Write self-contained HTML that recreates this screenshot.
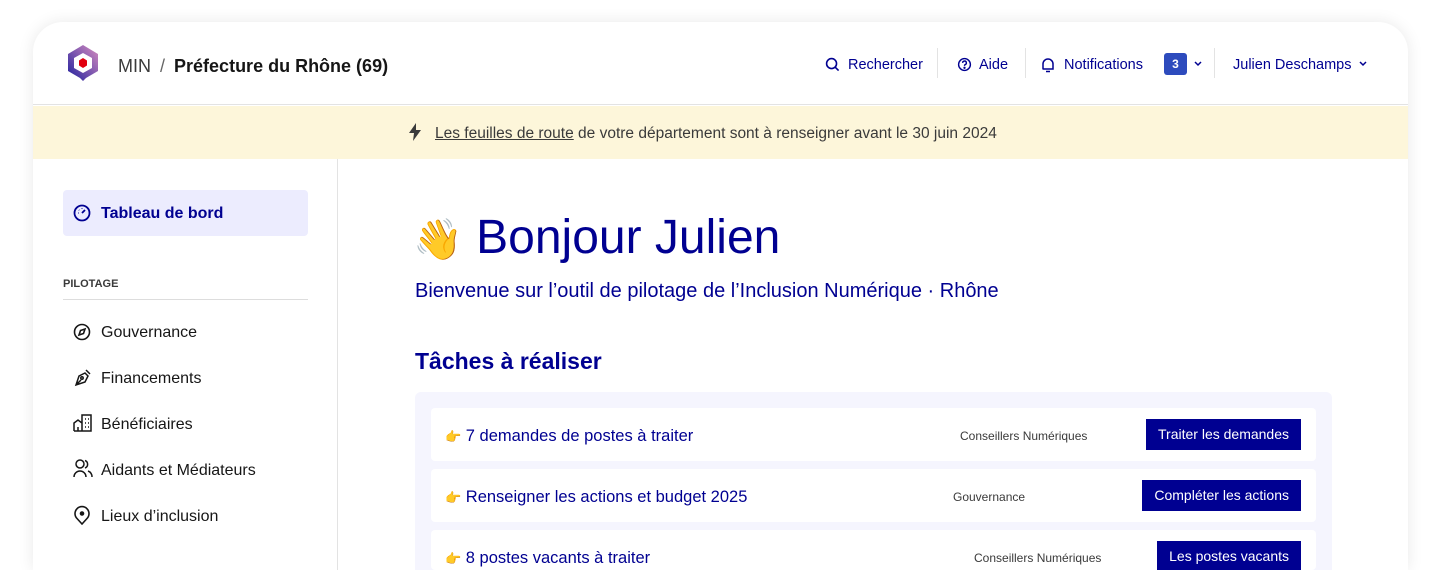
<!DOCTYPE html>
<html><head><meta charset="utf-8"><style>
*{box-sizing:border-box;margin:0;padding:0}
html,body{width:1442px;height:570px;overflow:hidden}
body{background:#fff;font-family:"Liberation Sans",sans-serif;position:relative}
.card{position:absolute;left:33px;top:22px;width:1375px;height:548px;border-radius:30px 30px 0 0;background:#fff;box-shadow:0 0 16px rgba(0,0,0,.09);overflow:hidden}
.hdr{height:83px;border-bottom:1px solid #e3e3e3;position:relative}
.abs{position:absolute;white-space:nowrap}
.nav{color:#000091;font-size:14.5px}
.sep{position:absolute;top:26px;width:1px;height:30px;background:#e3e3e3}
.banner{position:absolute;top:84px;left:0;right:0;height:53px;background:#fdf6da;font-size:15.5px;color:#3a3a3a}
.side{position:absolute;top:137px;left:0;width:305px;bottom:0;border-right:1px solid #e3e3e3}
.item{position:absolute;left:68px;font-size:16px;color:#161616}
.task{position:absolute;left:398px;width:885px;height:53px;background:#fff;border-radius:4px}
.task .t{position:absolute;left:14px;top:19px;font-size:16.5px;color:#000091}
.task .c{position:absolute;font-size:12px;color:#3a3a3a;top:21px}
.task .b{position:absolute;right:15px;top:11px;height:31px;background:#000091;color:#fff;font-size:14px;line-height:31px;padding:0 12px}
</style></head><body>
<div class="card">
 <div class="hdr">
  <svg class="abs" style="left:32px;top:22px" width="36" height="38" viewBox="0 0 36 38"><defs><linearGradient id="g" x1="0" y1="1" x2="1" y2="0"><stop offset="0" stop-color="#1f1f9e"/><stop offset="1" stop-color="#d98ec0"/></linearGradient></defs><path d="M18 1L33 10V27L21 34L18 37L15 34L3 27V10Z" fill="url(#g)"/><path d="M18 9L27 14V24L18 29L9 24V14Z" fill="#fff"/><path d="M18 14L22 16.5V21.5L18 24L14 21.5V16.5Z" fill="#e1000f"/></svg>
  <div class="abs" style="left:85px;top:34px;font-size:18px;color:#3a3a3a">MIN <span style="color:#666;margin:0 4px">/</span> <b style="color:#161616">Préfecture du Rhône (69)</b></div>
  <svg class="abs" style="left:792px;top:35px" width="15" height="15" viewBox="0 0 16 16" fill="none" stroke="#000091" stroke-width="1.7"><circle cx="7" cy="7" r="5.3"/><path d="M11 11l3.5 3.5"/></svg>
  <div class="abs nav" style="left:815px;top:35px">Rechercher</div>
  <div class="sep" style="left:904px"></div>
  <svg class="abs" style="left:924px;top:35px" width="15" height="15" viewBox="0 0 16 16" fill="none" stroke="#000091" stroke-width="1.5"><circle cx="8" cy="8" r="6.3"/><path d="M6 6.3a2 2 0 1 1 2.6 1.9c-.5.2-.6.6-.6 1.3"/><circle cx="8" cy="11.5" r=".5" fill="#000091"/></svg>
  <div class="abs nav" style="left:946px;top:35px">Aide</div>
  <div class="sep" style="left:992px"></div>
  <svg class="abs" style="left:1008px;top:35px" width="14" height="16" viewBox="0 0 14 16" fill="none" stroke="#000091" stroke-width="1.5"><path d="M2 12V7a5 5 0 0 1 10 0v5H1.5h11M5 14.5h4"/></svg>
  <div class="abs nav" style="left:1031px;top:35px">Notifications</div>
  <div class="abs" style="left:1131px;top:31px;width:23px;height:22px;background:#2d4bbd;border-radius:3px;color:#fff;font-size:12px;font-weight:bold;text-align:center;line-height:22px">3</div>
  <svg class="abs" style="left:1160px;top:38px" width="10" height="7" viewBox="0 0 10 7" fill="none" stroke="#000091" stroke-width="1.5"><path d="M2 2l3 3 3-3"/></svg>
  <div class="sep" style="left:1181px"></div>
  <div class="abs nav" style="left:1200px;top:35px">Julien Deschamps</div>
  <svg class="abs" style="left:1325px;top:38px" width="10" height="7" viewBox="0 0 10 7" fill="none" stroke="#000091" stroke-width="1.5"><path d="M2 2l3 3 3-3"/></svg>
 </div>
 <div class="banner">
  <svg class="abs" style="left:374px;top:16px" width="16" height="20" viewBox="0 0 16 20"><path d="M9 1L2 11h5l-1 8 8-11H9z" fill="#3a3a3a"/></svg>
  <div class="abs" style="left:402px;top:19px"><span style="text-decoration:underline">Les feuilles de route</span> de votre département sont à renseigner avant le 30 juin 2024</div>
 </div>
 <div class="side">
  <div class="abs" style="left:30px;top:31px;width:245px;height:46px;background:#ececfe;border-radius:4px"></div>
  <svg class="abs" style="left:40px;top:45px" width="18" height="18" viewBox="0 0 18 18" fill="none" stroke="#000091" stroke-width="1.8"><circle cx="9" cy="9" r="7.5"/><path d="M9 9l3-3M5 9h.5M6 6l.3.3M9 4.5v.5"/></svg>
  <div class="abs" style="left:68px;top:46px;font-size:16px;font-weight:bold;color:#000091">Tableau de bord</div>
  <div class="abs" style="left:30px;top:119px;font-size:11px;font-weight:bold;color:#3a3a3a">PILOTAGE</div>
  <div class="abs" style="left:30px;top:140px;width:245px;height:1px;background:#ddd"></div>
  <svg class="abs" style="left:40px;top:164px" width="18" height="18" viewBox="0 0 18 18" fill="none" stroke="#161616" stroke-width="1.6"><circle cx="9" cy="9" r="7.5"/><path d="M12 6l-1.5 4.5L6 12l1.5-4.5z"/></svg>
  <div class="item" style="top:165px">Gouvernance</div>
  <svg class="abs" style="left:40px;top:208px" width="20" height="20" viewBox="0 0 20 20" fill="none" stroke="#161616" stroke-width="1.5"><path d="M3 18l3-9 6-3 3 3-3 6zM3 18l5-5M13 3l4 4"/><circle cx="9" cy="11" r="1.2"/></svg>
  <div class="item" style="top:211px">Financements</div>
  <svg class="abs" style="left:40px;top:255px" width="20" height="18" viewBox="0 0 20 18" fill="none" stroke="#161616" stroke-width="1.5"><path d="M1 17V9l4-3 4 3v8M9 17V1h9v16H1M12 5h1M15 5h1M12 9h1M15 9h1M12 13h1M15 13h1M5 17v-4"/></svg>
  <div class="item" style="top:257px">Bénéficiaires</div>
  <svg class="abs" style="left:40px;top:300px" width="20" height="19" viewBox="0 0 20 19" fill="none" stroke="#161616" stroke-width="1.5"><circle cx="7" cy="5" r="4"/><path d="M1 18a6 6 0 0 1 12 0M12 1.5a4 4 0 0 1 0 7.5M15 12a6 6 0 0 1 4 6"/></svg>
  <div class="item" style="top:303px">Aidants et Médiateurs</div>
  <svg class="abs" style="left:40px;top:346px" width="18" height="20" viewBox="0 0 18 20" fill="none" stroke="#161616" stroke-width="1.6"><path d="M9 19l-5-5.5A7 7 0 1 1 14 13.5z"/><circle cx="9" cy="8.5" r="1.5" fill="#161616"/></svg>
  <div class="item" style="top:349px">Lieux d’inclusion</div>
 </div>
 <div class="abs" style="left:380px;top:188px;font-size:48px;color:#000091"><span style="font-size:40px">👋</span> Bonjour Julien</div>
 <div class="abs" style="left:382px;top:258px;font-size:20px;color:#000091">Bienvenue sur l’outil de pilotage de l’Inclusion Numérique · Rhône</div>
 <div class="abs" style="left:382px;top:326px;font-size:23px;font-weight:bold;color:#000091">Tâches à réaliser</div>
 <div class="abs" style="left:382px;top:370px;width:917px;height:200px;background:#f5f5fe;border-radius:6px 6px 0 0"></div>
 <div class="task" style="top:386px"><div class="t"><span style="font-size:13px">👉</span> 7 demandes de postes à traiter</div><div class="c" style="left:529px">Conseillers Numériques</div><div class="b">Traiter les demandes</div></div>
 <div class="task" style="top:447px"><div class="t"><span style="font-size:13px">👉</span> Renseigner les actions et budget 2025</div><div class="c" style="left:522px">Gouvernance</div><div class="b">Compléter les actions</div></div>
 <div class="task" style="top:508px;height:40px"><div class="t"><span style="font-size:13px">👉</span> 8 postes vacants à traiter</div><div class="c" style="left:543px">Conseillers Numériques</div><div class="b">Les postes vacants</div></div>
</div>
</body></html>
